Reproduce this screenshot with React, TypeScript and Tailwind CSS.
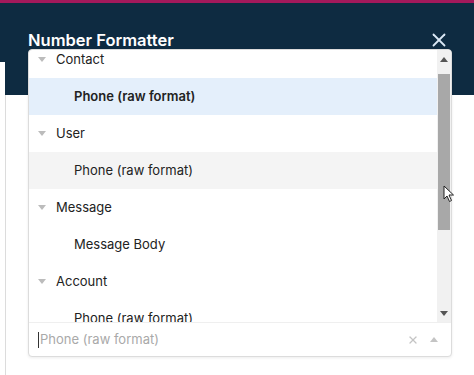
import { X } from "lucide-react";

type Row = { label: string; kind: "group" | "item"; state?: "selected" | "hover" };

const rows: Row[] = [
  { label: "Contact", kind: "group" },
  { label: "Phone (raw format)", kind: "item", state: "selected" },
  { label: "User", kind: "group" },
  { label: "Phone (raw format)", kind: "item", state: "hover" },
  { label: "Message", kind: "group" },
  { label: "Message Body", kind: "item" },
  { label: "Account", kind: "group" },
  { label: "Phone (raw format)", kind: "item" },
];

function Caret({ up, className }: { up?: boolean; className?: string }) {
  return (
    <svg width="8" height="5" viewBox="0 0 8 5" className={className}>
      <path d={up ? "M0 5 L4 0 L8 5 Z" : "M0 0 L8 0 L4 5 Z"} fill="currentColor" />
    </svg>
  );
}

export default function App() {
  return (
    <div
      className="relative w-[474px] h-[375px] overflow-hidden bg-white"
      style={{ fontFamily: "Inter, 'Noto Sans', sans-serif" }}
    >
      <div className="h-[3px] bg-[#a3195b]" />
      <div className="relative h-[92px] bg-[#0e2b41]">
        <div className="absolute left-0 top-[59px] w-[5px] h-[33px] bg-white" />
        <div className="flex items-center justify-between pl-[28px] pr-[24px] pt-[26px]">
          <h1 className="text-[16.5px] font-semibold text-white leading-none">Number Formatter</h1>
          <X size={22} strokeWidth={2} className="text-[#dbe8f5]" />
        </div>
      </div>
      <div className="h-[280px] border-l border-[#dcdcdc] ml-[5px]" />

      {/* open select dropdown */}
      <div className="absolute left-[28px] top-[49px] w-[424px] h-[308px] bg-white border border-[#dcdcdc] rounded-[4px] shadow-[0_1px_3px_rgba(0,0,0,0.08)] flex flex-col overflow-hidden">
        <div className="flex h-[272px]">
          <div className="flex-1 overflow-hidden">
            <div className="-mt-[9px]">
              {rows.map((r, i) => (
                <div
                  key={i}
                  className={
                    "h-[37px] flex items-center text-[13px] text-[#222] " +
                    (r.kind === "group" ? "pl-[9px]" : "pl-[45px]") +
                    (r.state === "selected" ? " bg-[#e4effb] font-semibold" : "") +
                    (r.state === "hover" ? " bg-[#f4f4f4]" : "")
                  }
                >
                  {r.kind === "group" && <Caret className="text-[#bcbcbc] mr-[10px]" />}
                  {r.label}
                </div>
              ))}
            </div>
          </div>
          <div className="w-[14px] bg-[#f1f1f1] flex flex-col items-center">
            <div className="h-[16px] flex items-center justify-center pt-[2px]">
              <Caret up className="text-[#555]" />
            </div>
            <div className="mt-[8px] h-[156px] w-[12px] bg-[#a8a8a8]" />
            <div className="flex-1" />
            <div className="h-[16px] flex items-center justify-center pb-[2px]">
              <Caret className="text-[#555]" />
            </div>
          </div>
        </div>
        <div className="flex-1 border-t border-[#efefef] flex items-center pl-[9px] pr-[13px]">
          <span className="w-px h-[16px] bg-[#333] mr-[1px]" />
          <span className="flex-1 text-[13px] text-[#a9a9a9]">Phone (raw format)</span>
          <X size={12} strokeWidth={2.5} className="text-[#c4c4c4] mr-[11px]" />
          <Caret up className="text-[#c4c4c4]" />
        </div>
      </div>

      {/* mouse pointer */}
      <svg
        className="absolute left-[443px] top-[185px]"
        width="12"
        height="18"
        viewBox="0 0 12 18"
      >
        <path d="M1 1 L1 14 L4 11 L6.5 16.5 L8.5 15.5 L6 10 L10.5 10 Z" fill="#fff" stroke="#222" strokeWidth="1" strokeLinejoin="round" />
      </svg>
    </div>
  );
}
